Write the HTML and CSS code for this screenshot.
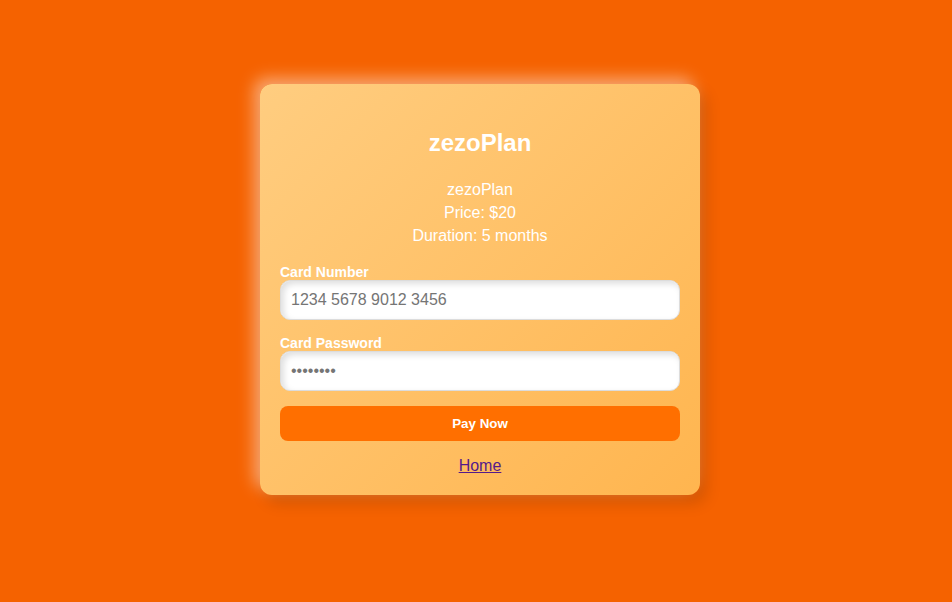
FILE: index.html
```html
<!DOCTYPE html>
<html lang="en">
<head>
<meta charset="UTF-8">
<title>zezoPlan - Payment</title>
<link rel="stylesheet" href="styles.css">
</head>
<body>
<div class="page">
  <div class="card">
    <h2 class="title">zezoPlan</h2>
    <div class="plan">
      <div>zezoPlan</div>
      <div>Price: $20</div>
      <div>Duration: 5 months</div>
    </div>
    <form class="form">
      <div class="field">
        <label class="label" for="cn">Card Number</label>
        <input class="input" id="cn" type="text" placeholder="1234 5678 9012 3456">
      </div>
      <div class="field">
        <label class="label" for="cp">Card Password</label>
        <input class="input" id="cp" type="password" placeholder="••••••••">
      </div>
      <button class="pay" type="button">Pay Now</button>
    </form>
    <div class="home"><a href="#" class="home-link">Home</a></div>
  </div>
</div>
</body>
</html>
```

FILE: styles.css
```css
html, body {
  margin: 0;
  padding: 0;
}
body {
  background: #f56200;
  font-family: "Liberation Sans", Arial, sans-serif;
  color: #fff;
  height: 602px;
  overflow: hidden;
}
.page {
  display: flex;
  justify-content: center;
  align-items: flex-start;
  padding: 84px 0 0 8px;
}
.card {
  width: 400px;
  padding: 20px;
  border-radius: 12px;
  background: linear-gradient(135deg, #ffcd80 0%, #ffb54f 100%);
  box-shadow: -6px -6px 16px rgba(255, 255, 255, 0.45), 6px 8px 16px rgba(0, 0, 0, 0.14);
}
.title {
  margin: 25px 0 21px;
  font-size: 24px;
  font-weight: bold;
  text-align: center;
  line-height: 27.6px;
}
.plan {
  text-align: center;
  font-size: 16px;
  line-height: 23px;
}
.form {
  display: flex;
  flex-direction: column;
  gap: 15px;
  margin-top: 17px;
}
.field {
  display: flex;
  flex-direction: column;
}
.label {
  font-size: 14px;
  font-weight: bold;
  line-height: 16px;
}
.input {
  box-sizing: border-box;
  width: 100%;
  height: 40px;
  padding: 10px;
  border: 1px solid #dcdcdc;
  border-radius: 10px;
  background: #fff;
  font-family: "Liberation Sans", Arial, sans-serif;
  font-size: 16px;
  color: #333;
  outline: none;
  box-shadow: inset 3px 3px 6px rgba(0, 0, 0, 0.13), inset -3px -3px 6px rgba(255, 255, 255, 0.8);
}
.input::placeholder {
  color: #757575;
}
.pay {
  height: 35px;
  border: none;
  border-radius: 8px;
  background: #ff6f00;
  color: #fff;
  font-family: "Liberation Sans", Arial, sans-serif;
  font-size: 13.333px;
  font-weight: bold;
}
.home {
  text-align: center;
  margin-top: 16px;
  font-size: 16px;
  line-height: 18.4px;
}
.home-link {
  color: #551a8b;
}
```
